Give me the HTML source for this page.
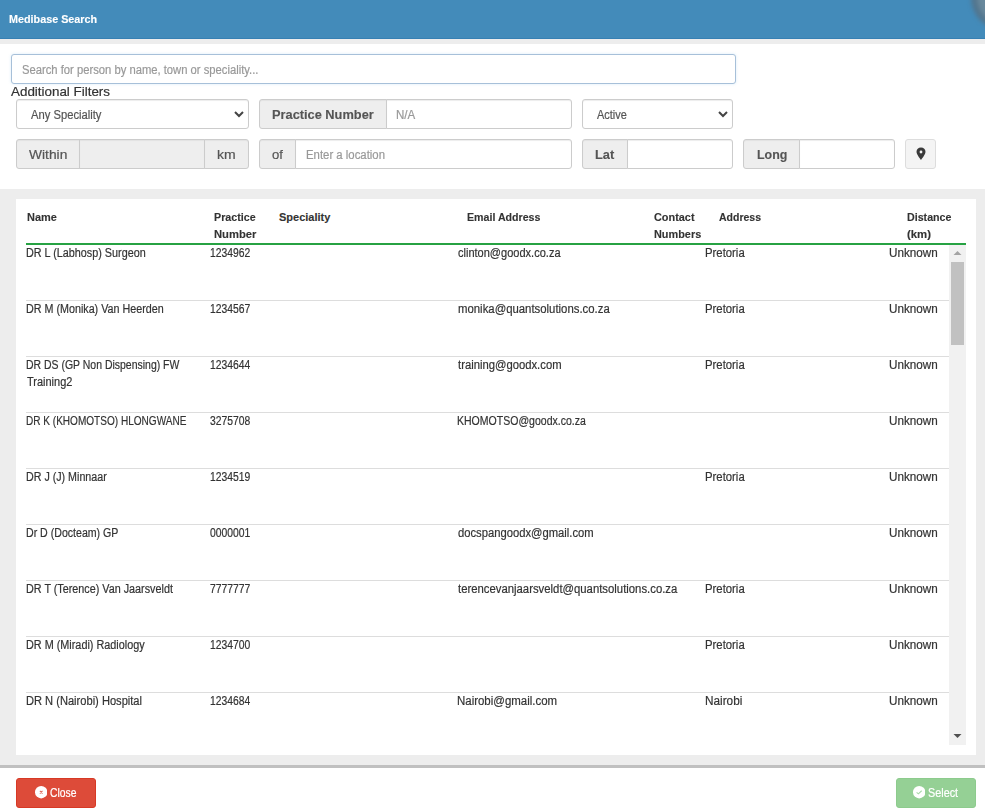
<!DOCTYPE html>
<html><head><meta charset="utf-8">
<style>
*{box-sizing:border-box;margin:0;padding:0}
html,body{width:985px;height:810px;overflow:hidden;background:#fff;font-family:"Liberation Sans",sans-serif;color:#333}
.a{position:absolute}
.t{position:absolute;transform-origin:0 0}
#hdr{left:0;top:0;width:985px;height:39px;background:#438bba;border-bottom:1px solid #3780b3}
#hdrband{left:0;top:39px;width:985px;height:5px;background:#ededed}
.closeblob{left:971px;top:-37px;width:68px;height:68px;border-radius:50%;background:rgba(110,135,150,.85);border:6px solid rgba(80,115,140,.9);filter:blur(2px)}
.inp{border:1px solid #ccc;border-radius:3px;background:#fff;box-shadow:inset 0 1px 1px rgba(0,0,0,.075)}
.addon{background:#eee;border:1px solid #ccc;box-shadow:inset 0 1px 1px rgba(0,0,0,.05)}
#band{left:0;top:189px;width:985px;height:579px;background:#ededed;border-bottom:3px solid #c0c0c0}
#panel{left:16px;top:199px;width:960px;height:556px;background:#fff}
.row{left:26px;width:923px;height:1px;background:#ddd}
</style></head><body>
<div class="a" id="hdr"></div>
<div class="a" id="hdrband"></div>
<div class="a closeblob"></div>

<div class="a inp" style="left:11px;top:54px;width:725px;height:30px;border-color:#a7c0d9;box-shadow:0 0 3px rgba(102,175,233,.25)"></div>

<div class="a inp" style="left:16px;top:99px;width:233px;height:30px"></div>
<svg class="a" style="left:234px;top:110px" width="10" height="8" viewBox="0 0 10 8"><path d="M1 2 L5 6 L9 2" stroke="#444" stroke-width="2" fill="none"/></svg>
<div class="a addon" style="left:259px;top:99px;width:128px;height:30px;border-radius:3px 0 0 3px"></div>
<div class="a inp" style="left:386px;top:99px;width:186px;height:30px;border-radius:0 3px 3px 0"></div>
<div class="a inp" style="left:582px;top:99px;width:151px;height:30px"></div>
<svg class="a" style="left:718px;top:110px" width="10" height="8" viewBox="0 0 10 8"><path d="M1 2 L5 6 L9 2" stroke="#444" stroke-width="2" fill="none"/></svg>

<div class="a addon" style="left:16px;top:139px;width:64px;height:30px;border-radius:3px 0 0 3px"></div>
<div class="a addon" style="left:79px;top:139px;width:126px;height:30px"></div>
<div class="a addon" style="left:204px;top:139px;width:45px;height:30px;border-radius:0 3px 3px 0"></div>
<div class="a addon" style="left:259px;top:139px;width:37px;height:30px;border-radius:3px 0 0 3px"></div>
<div class="a inp" style="left:295px;top:139px;width:277px;height:30px;border-radius:0 3px 3px 0"></div>
<div class="a addon" style="left:582px;top:139px;width:46px;height:30px;border-radius:3px 0 0 3px"></div>
<div class="a inp" style="left:627px;top:139px;width:106px;height:30px;border-radius:0 3px 3px 0"></div>
<div class="a addon" style="left:743px;top:139px;width:57px;height:30px;border-radius:3px 0 0 3px"></div>
<div class="a inp" style="left:799px;top:139px;width:96px;height:30px;border-radius:0 3px 3px 0"></div>
<div class="a" style="left:905px;top:139px;width:31px;height:30px;background:#f4f4f4;border:1px solid #ddd;border-radius:3px"></div>
<svg class="a" style="left:916px;top:147px" width="10" height="14" viewBox="0 0 10 14"><path d="M5 0.5 C2.3 0.5 0.5 2.4 0.5 4.8 C0.5 7.6 5 13 5 13 C5 13 9.5 7.6 9.5 4.8 C9.5 2.4 7.7 0.5 5 0.5 Z M5 3.6 A1.4 1.4 0 1 1 5 6.4 A1.4 1.4 0 1 1 5 3.6 Z" fill="#3a3a3a" fill-rule="evenodd"/></svg>

<div class="a" id="band"></div>
<div class="a" id="panel"></div>
<div class="a" style="left:26px;top:243px;width:940px;height:2px;background:#27a243"></div>
<div class="a row" style="top:300px"></div>
<div class="a row" style="top:356px"></div>
<div class="a row" style="top:412px"></div>
<div class="a row" style="top:468px"></div>
<div class="a row" style="top:524px"></div>
<div class="a row" style="top:580px"></div>
<div class="a row" style="top:636px"></div>
<div class="a row" style="top:692px"></div>

<div class="a" style="left:949px;top:245px;width:17px;height:500px;background:#f1f1f1"></div>
<div class="a" style="left:951px;top:262px;width:13px;height:83px;background:#c1c1c1"></div>
<svg class="a" style="left:953px;top:250px" width="9" height="6"><path d="M0.5 5 L4.5 1 L8.5 5 Z" fill="#a3a3a3"/></svg>
<svg class="a" style="left:953px;top:733px" width="9" height="6"><path d="M0.5 1 L4.5 5 L8.5 1 Z" fill="#505050"/></svg>

<div class="a" style="left:16px;top:778px;width:80px;height:30px;background:#dd4b39;border:1px solid #d73925;border-radius:3px"></div>
<svg class="a" style="left:34.6px;top:786.3px" width="12.4" height="12.4" viewBox="0 0 12 12"><circle cx="6" cy="6" r="6" fill="#fff"/><path d="M4.7 4.7 L7.3 7.3 M7.3 4.7 L4.7 7.3" stroke="#e07060" stroke-width="1"/></svg>
<div class="a" style="left:896px;top:778px;width:80px;height:30px;background:#95d095;border:1px solid #8dcb8d;border-radius:3px"></div>
<svg class="a" style="left:913.1px;top:786.2px" width="12.4" height="12.4" viewBox="0 0 12 12"><circle cx="6" cy="6" r="6" fill="#fff"/><path d="M3.5 6.2 L5.2 7.6 L8.4 4.6" stroke="#a6d8a6" stroke-width="1" fill="none"/></svg>
<div class=t style="left:8.70px;top:9px;color:#fff;font-family:'Liberation Sans',sans-serif;font-size:11.5px;font-weight:700;line-height:20px;white-space:nowrap;-webkit-text-stroke-width:0.12px;;transform:scaleX(0.9383)">Medibase Search</div>
<div class=t style="left:22.20px;top:60px;color:#999;font-family:'Liberation Sans',sans-serif;font-size:12px;font-weight:400;line-height:20px;white-space:nowrap;-webkit-text-stroke-width:0.2px;;transform:scaleX(0.9361)">Search for person by name, town or speciality...</div>
<div class=t style="left:11.40px;top:82px;color:#333;font-family:'Liberation Sans',sans-serif;font-size:13px;font-weight:400;line-height:20px;white-space:nowrap;-webkit-text-stroke-width:0.2px;;transform:scaleX(1.0302)">Additional Filters</div>
<div class=t style="left:30.60px;top:105px;color:#555;font-family:'Liberation Sans',sans-serif;font-size:12px;font-weight:400;line-height:20px;white-space:nowrap;-webkit-text-stroke-width:0.2px;;transform:scaleX(0.9342)">Any Speciality</div>
<div class=t style="left:272.00px;top:105px;color:#555;font-family:'Liberation Sans',sans-serif;font-size:12.5px;font-weight:700;line-height:20px;white-space:nowrap;-webkit-text-stroke-width:0.12px;;transform:scaleX(1.0240)">Practice Number</div>
<div class=t style="left:396.44px;top:105px;color:#999;font-family:'Liberation Sans',sans-serif;font-size:12px;font-weight:400;line-height:20px;white-space:nowrap;-webkit-text-stroke-width:0.2px;;transform:scaleX(0.9632)">N/A</div>
<div class=t style="left:596.80px;top:105px;color:#555;font-family:'Liberation Sans',sans-serif;font-size:12px;font-weight:400;line-height:20px;white-space:nowrap;-webkit-text-stroke-width:0.2px;;transform:scaleX(0.9152)">Active</div>
<div class=t style="left:29.00px;top:145px;color:#555;font-family:'Liberation Sans',sans-serif;font-size:12.5px;font-weight:400;line-height:20px;white-space:nowrap;-webkit-text-stroke-width:0.2px;;transform:scaleX(1.1029)">Within</div>
<div class=t style="left:217.30px;top:145px;color:#555;font-family:'Liberation Sans',sans-serif;font-size:12.5px;font-weight:400;line-height:20px;white-space:nowrap;-webkit-text-stroke-width:0.2px;;transform:scaleX(1.1187)">km</div>
<div class=t style="left:271.70px;top:145px;color:#555;font-family:'Liberation Sans',sans-serif;font-size:12.5px;font-weight:400;line-height:20px;white-space:nowrap;-webkit-text-stroke-width:0.2px;;transform:scaleX(1.0455)">of</div>
<div class=t style="left:305.85px;top:145px;color:#999;font-family:'Liberation Sans',sans-serif;font-size:12px;font-weight:400;line-height:20px;white-space:nowrap;-webkit-text-stroke-width:0.2px;;transform:scaleX(0.9476)">Enter a location</div>
<div class=t style="left:595.20px;top:145px;color:#555;font-family:'Liberation Sans',sans-serif;font-size:12.5px;font-weight:700;line-height:20px;white-space:nowrap;-webkit-text-stroke-width:0.12px;;transform:scaleX(1.0263)">Lat</div>
<div class=t style="left:757.00px;top:145px;color:#555;font-family:'Liberation Sans',sans-serif;font-size:12.5px;font-weight:700;line-height:20px;white-space:nowrap;-webkit-text-stroke-width:0.12px;;transform:scaleX(0.9933)">Long</div>
<div class=t style="left:26.50px;top:207px;color:#333;font-family:'Liberation Sans',sans-serif;font-size:11px;font-weight:700;line-height:20px;white-space:nowrap;-webkit-text-stroke-width:0.12px;;transform:scaleX(0.9967)">Name</div>
<div class=t style="left:214.30px;top:207px;color:#333;font-family:'Liberation Sans',sans-serif;font-size:11px;font-weight:700;line-height:20px;white-space:nowrap;-webkit-text-stroke-width:0.12px;;transform:scaleX(0.9744)">Practice</div>
<div class=t style="left:214.30px;top:224px;color:#333;font-family:'Liberation Sans',sans-serif;font-size:11px;font-weight:700;line-height:20px;white-space:nowrap;-webkit-text-stroke-width:0.12px;;transform:scaleX(1.0214)">Number</div>
<div class=t style="left:279.00px;top:207px;color:#333;font-family:'Liberation Sans',sans-serif;font-size:11px;font-weight:700;line-height:20px;white-space:nowrap;-webkit-text-stroke-width:0.12px;;transform:scaleX(1.0000)">Speciality</div>
<div class=t style="left:466.60px;top:207px;color:#333;font-family:'Liberation Sans',sans-serif;font-size:11px;font-weight:700;line-height:20px;white-space:nowrap;-webkit-text-stroke-width:0.12px;;transform:scaleX(0.9658)">Email Address</div>
<div class=t style="left:654.40px;top:207px;color:#333;font-family:'Liberation Sans',sans-serif;font-size:11px;font-weight:700;line-height:20px;white-space:nowrap;-webkit-text-stroke-width:0.12px;;transform:scaleX(0.9902)">Contact</div>
<div class=t style="left:654.40px;top:224px;color:#333;font-family:'Liberation Sans',sans-serif;font-size:11px;font-weight:700;line-height:20px;white-space:nowrap;-webkit-text-stroke-width:0.12px;;transform:scaleX(0.9896)">Numbers</div>
<div class=t style="left:718.50px;top:207px;color:#333;font-family:'Liberation Sans',sans-serif;font-size:11px;font-weight:700;line-height:20px;white-space:nowrap;-webkit-text-stroke-width:0.12px;;transform:scaleX(0.9545)">Address</div>
<div class=t style="left:906.70px;top:207px;color:#333;font-family:'Liberation Sans',sans-serif;font-size:11px;font-weight:700;line-height:20px;white-space:nowrap;-webkit-text-stroke-width:0.12px;;transform:scaleX(0.9696)">Distance</div>
<div class=t style="left:906.70px;top:224px;color:#333;font-family:'Liberation Sans',sans-serif;font-size:11px;font-weight:700;line-height:20px;white-space:nowrap;-webkit-text-stroke-width:0.12px;;transform:scaleX(1.0348)">(km)</div>
<div class=t style="left:25.74px;top:243px;color:#333;font-family:'Liberation Sans',sans-serif;font-size:12.5px;font-weight:400;line-height:20px;white-space:nowrap;-webkit-text-stroke-width:0.2px;;transform:scaleX(0.8642)">DR L (Labhosp) Surgeon</div>
<div class=t style="left:210.00px;top:243px;color:#333;font-family:'Liberation Sans',sans-serif;font-size:12.5px;font-weight:400;line-height:20px;white-space:nowrap;-webkit-text-stroke-width:0.2px;;transform:scaleX(0.8286)">1234962</div>
<div class=t style="left:458.00px;top:243px;color:#333;font-family:'Liberation Sans',sans-serif;font-size:12.5px;font-weight:400;line-height:20px;white-space:nowrap;-webkit-text-stroke-width:0.2px;;transform:scaleX(0.8821)">clinton@goodx.co.za</div>
<div class=t style="left:705.49px;top:243px;color:#333;font-family:'Liberation Sans',sans-serif;font-size:12.5px;font-weight:400;line-height:20px;white-space:nowrap;-webkit-text-stroke-width:0.2px;;transform:scaleX(0.9070)">Pretoria</div>
<div class=t style="left:888.86px;top:243px;color:#333;font-family:'Liberation Sans',sans-serif;font-size:12.5px;font-weight:400;line-height:20px;white-space:nowrap;-webkit-text-stroke-width:0.2px;;transform:scaleX(0.9353)">Unknown</div>
<div class=t style="left:25.74px;top:299px;color:#333;font-family:'Liberation Sans',sans-serif;font-size:12.5px;font-weight:400;line-height:20px;white-space:nowrap;-webkit-text-stroke-width:0.2px;;transform:scaleX(0.8591)">DR M (Monika) Van Heerden</div>
<div class=t style="left:210.00px;top:299px;color:#333;font-family:'Liberation Sans',sans-serif;font-size:12.5px;font-weight:400;line-height:20px;white-space:nowrap;-webkit-text-stroke-width:0.2px;;transform:scaleX(0.8286)">1234567</div>
<div class=t style="left:458.00px;top:299px;color:#333;font-family:'Liberation Sans',sans-serif;font-size:12.5px;font-weight:400;line-height:20px;white-space:nowrap;-webkit-text-stroke-width:0.2px;;transform:scaleX(0.9090)">monika@quantsolutions.co.za</div>
<div class=t style="left:705.49px;top:299px;color:#333;font-family:'Liberation Sans',sans-serif;font-size:12.5px;font-weight:400;line-height:20px;white-space:nowrap;-webkit-text-stroke-width:0.2px;;transform:scaleX(0.9070)">Pretoria</div>
<div class=t style="left:888.86px;top:299px;color:#333;font-family:'Liberation Sans',sans-serif;font-size:12.5px;font-weight:400;line-height:20px;white-space:nowrap;-webkit-text-stroke-width:0.2px;;transform:scaleX(0.9353)">Unknown</div>
<div class=t style="left:25.76px;top:355px;color:#333;font-family:'Liberation Sans',sans-serif;font-size:12.5px;font-weight:400;line-height:20px;white-space:nowrap;-webkit-text-stroke-width:0.2px;;transform:scaleX(0.8374)">DR DS (GP Non Dispensing) FW</div>
<div class=t style="left:26.70px;top:372px;color:#333;font-family:'Liberation Sans',sans-serif;font-size:12.5px;font-weight:400;line-height:20px;white-space:nowrap;-webkit-text-stroke-width:0.2px;;transform:scaleX(0.8788)">Training2</div>
<div class=t style="left:210.00px;top:355px;color:#333;font-family:'Liberation Sans',sans-serif;font-size:12.5px;font-weight:400;line-height:20px;white-space:nowrap;-webkit-text-stroke-width:0.2px;;transform:scaleX(0.8286)">1234644</div>
<div class=t style="left:458.00px;top:355px;color:#333;font-family:'Liberation Sans',sans-serif;font-size:12.5px;font-weight:400;line-height:20px;white-space:nowrap;-webkit-text-stroke-width:0.2px;;transform:scaleX(0.9017)">training@goodx.com</div>
<div class=t style="left:705.49px;top:355px;color:#333;font-family:'Liberation Sans',sans-serif;font-size:12.5px;font-weight:400;line-height:20px;white-space:nowrap;-webkit-text-stroke-width:0.2px;;transform:scaleX(0.9070)">Pretoria</div>
<div class=t style="left:888.86px;top:355px;color:#333;font-family:'Liberation Sans',sans-serif;font-size:12.5px;font-weight:400;line-height:20px;white-space:nowrap;-webkit-text-stroke-width:0.2px;;transform:scaleX(0.9353)">Unknown</div>
<div class=t style="left:25.80px;top:411px;color:#333;font-family:'Liberation Sans',sans-serif;font-size:12.5px;font-weight:400;line-height:20px;white-space:nowrap;-webkit-text-stroke-width:0.2px;;transform:scaleX(0.8040)">DR K (KHOMOTSO) HLONGWANE</div>
<div class=t style="left:210.00px;top:411px;color:#333;font-family:'Liberation Sans',sans-serif;font-size:12.5px;font-weight:400;line-height:20px;white-space:nowrap;-webkit-text-stroke-width:0.2px;;transform:scaleX(0.8286)">3275708</div>
<div class=t style="left:457.16px;top:411px;color:#333;font-family:'Liberation Sans',sans-serif;font-size:12.5px;font-weight:400;line-height:20px;white-space:nowrap;-webkit-text-stroke-width:0.2px;;transform:scaleX(0.8421)">KHOMOTSO@goodx.co.za</div>
<div class=t style="left:888.86px;top:411px;color:#333;font-family:'Liberation Sans',sans-serif;font-size:12.5px;font-weight:400;line-height:20px;white-space:nowrap;-webkit-text-stroke-width:0.2px;;transform:scaleX(0.9353)">Unknown</div>
<div class=t style="left:25.75px;top:467px;color:#333;font-family:'Liberation Sans',sans-serif;font-size:12.5px;font-weight:400;line-height:20px;white-space:nowrap;-webkit-text-stroke-width:0.2px;;transform:scaleX(0.8543)">DR J (J) Minnaar</div>
<div class=t style="left:210.00px;top:467px;color:#333;font-family:'Liberation Sans',sans-serif;font-size:12.5px;font-weight:400;line-height:20px;white-space:nowrap;-webkit-text-stroke-width:0.2px;;transform:scaleX(0.8286)">1234519</div>
<div class=t style="left:705.49px;top:467px;color:#333;font-family:'Liberation Sans',sans-serif;font-size:12.5px;font-weight:400;line-height:20px;white-space:nowrap;-webkit-text-stroke-width:0.2px;;transform:scaleX(0.9070)">Pretoria</div>
<div class=t style="left:888.86px;top:467px;color:#333;font-family:'Liberation Sans',sans-serif;font-size:12.5px;font-weight:400;line-height:20px;white-space:nowrap;-webkit-text-stroke-width:0.2px;;transform:scaleX(0.9353)">Unknown</div>
<div class=t style="left:25.75px;top:523px;color:#333;font-family:'Liberation Sans',sans-serif;font-size:12.5px;font-weight:400;line-height:20px;white-space:nowrap;-webkit-text-stroke-width:0.2px;;transform:scaleX(0.8472)">Dr D (Docteam) GP</div>
<div class=t style="left:210.00px;top:523px;color:#333;font-family:'Liberation Sans',sans-serif;font-size:12.5px;font-weight:400;line-height:20px;white-space:nowrap;-webkit-text-stroke-width:0.2px;;transform:scaleX(0.8286)">0000001</div>
<div class=t style="left:458.00px;top:523px;color:#333;font-family:'Liberation Sans',sans-serif;font-size:12.5px;font-weight:400;line-height:20px;white-space:nowrap;-webkit-text-stroke-width:0.2px;;transform:scaleX(0.8987)">docspangoodx@gmail.com</div>
<div class=t style="left:888.86px;top:523px;color:#333;font-family:'Liberation Sans',sans-serif;font-size:12.5px;font-weight:400;line-height:20px;white-space:nowrap;-webkit-text-stroke-width:0.2px;;transform:scaleX(0.9353)">Unknown</div>
<div class=t style="left:25.74px;top:579px;color:#333;font-family:'Liberation Sans',sans-serif;font-size:12.5px;font-weight:400;line-height:20px;white-space:nowrap;-webkit-text-stroke-width:0.2px;;transform:scaleX(0.8629)">DR T (Terence) Van Jaarsveldt</div>
<div class=t style="left:210.00px;top:579px;color:#333;font-family:'Liberation Sans',sans-serif;font-size:12.5px;font-weight:400;line-height:20px;white-space:nowrap;-webkit-text-stroke-width:0.2px;;transform:scaleX(0.8286)">7777777</div>
<div class=t style="left:458.00px;top:579px;color:#333;font-family:'Liberation Sans',sans-serif;font-size:12.5px;font-weight:400;line-height:20px;white-space:nowrap;-webkit-text-stroke-width:0.2px;;transform:scaleX(0.9062)">terencevanjaarsveldt@quantsolutions.co.za</div>
<div class=t style="left:705.49px;top:579px;color:#333;font-family:'Liberation Sans',sans-serif;font-size:12.5px;font-weight:400;line-height:20px;white-space:nowrap;-webkit-text-stroke-width:0.2px;;transform:scaleX(0.9070)">Pretoria</div>
<div class=t style="left:888.86px;top:579px;color:#333;font-family:'Liberation Sans',sans-serif;font-size:12.5px;font-weight:400;line-height:20px;white-space:nowrap;-webkit-text-stroke-width:0.2px;;transform:scaleX(0.9353)">Unknown</div>
<div class=t style="left:25.73px;top:635px;color:#333;font-family:'Liberation Sans',sans-serif;font-size:12.5px;font-weight:400;line-height:20px;white-space:nowrap;-webkit-text-stroke-width:0.2px;;transform:scaleX(0.8669)">DR M (Miradi) Radiology</div>
<div class=t style="left:210.00px;top:635px;color:#333;font-family:'Liberation Sans',sans-serif;font-size:12.5px;font-weight:400;line-height:20px;white-space:nowrap;-webkit-text-stroke-width:0.2px;;transform:scaleX(0.8286)">1234700</div>
<div class=t style="left:705.49px;top:635px;color:#333;font-family:'Liberation Sans',sans-serif;font-size:12.5px;font-weight:400;line-height:20px;white-space:nowrap;-webkit-text-stroke-width:0.2px;;transform:scaleX(0.9070)">Pretoria</div>
<div class=t style="left:888.86px;top:635px;color:#333;font-family:'Liberation Sans',sans-serif;font-size:12.5px;font-weight:400;line-height:20px;white-space:nowrap;-webkit-text-stroke-width:0.2px;;transform:scaleX(0.9353)">Unknown</div>
<div class=t style="left:25.71px;top:691px;color:#333;font-family:'Liberation Sans',sans-serif;font-size:12.5px;font-weight:400;line-height:20px;white-space:nowrap;-webkit-text-stroke-width:0.2px;;transform:scaleX(0.8884)">DR N (Nairobi) Hospital</div>
<div class=t style="left:210.00px;top:691px;color:#333;font-family:'Liberation Sans',sans-serif;font-size:12.5px;font-weight:400;line-height:20px;white-space:nowrap;-webkit-text-stroke-width:0.2px;;transform:scaleX(0.8286)">1234684</div>
<div class=t style="left:457.08px;top:691px;color:#333;font-family:'Liberation Sans',sans-serif;font-size:12.5px;font-weight:400;line-height:20px;white-space:nowrap;-webkit-text-stroke-width:0.2px;;transform:scaleX(0.9157)">Nairobi@gmail.com</div>
<div class=t style="left:705.46px;top:691px;color:#333;font-family:'Liberation Sans',sans-serif;font-size:12.5px;font-weight:400;line-height:20px;white-space:nowrap;-webkit-text-stroke-width:0.2px;;transform:scaleX(0.9421)">Nairobi</div>
<div class=t style="left:888.86px;top:691px;color:#333;font-family:'Liberation Sans',sans-serif;font-size:12.5px;font-weight:400;line-height:20px;white-space:nowrap;-webkit-text-stroke-width:0.2px;;transform:scaleX(0.9353)">Unknown</div>
<div class=t style="left:50.00px;top:783px;color:#fff;font-family:'Liberation Sans',sans-serif;font-size:12px;font-weight:400;line-height:20px;white-space:nowrap;-webkit-text-stroke-width:0.2px;;transform:scaleX(0.8613)">Close</div>
<div class=t style="left:928.00px;top:783px;color:#fff;font-family:'Liberation Sans',sans-serif;font-size:12px;font-weight:400;line-height:20px;white-space:nowrap;-webkit-text-stroke-width:0.2px;;transform:scaleX(0.9029)">Select</div>
</body></html>
